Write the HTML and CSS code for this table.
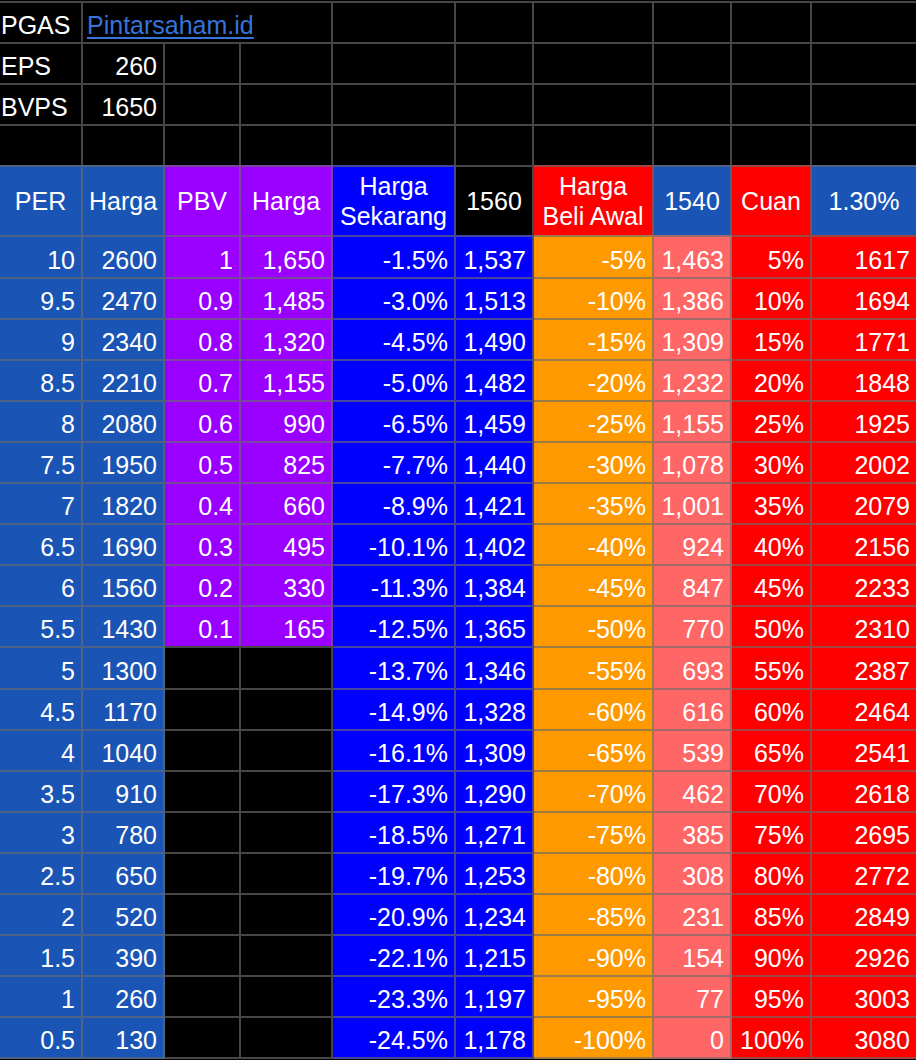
FILE: index.html
```html
<!DOCTYPE html>
<html>
<head>
<meta charset="utf-8">
<title>PGAS</title>
<link rel="stylesheet" href="styles.css">
</head>
<body>
<div class="sheet">
  <div class="c l">PGAS</div><div class="c link s3"><a href="#">Pintarsaham.id</a></div><div class="c"></div><div class="c"></div><div class="c"></div><div class="c"></div><div class="c"></div><div class="c e"></div>
  <div class="c l">EPS</div><div class="c n">260</div><div class="c"></div><div class="c"></div><div class="c"></div><div class="c"></div><div class="c"></div><div class="c"></div><div class="c"></div><div class="c e"></div>
  <div class="c l">BVPS</div><div class="c n">1650</div><div class="c"></div><div class="c"></div><div class="c"></div><div class="c"></div><div class="c"></div><div class="c"></div><div class="c"></div><div class="c e"></div>
  <div class="c"></div><div class="c"></div><div class="c"></div><div class="c"></div><div class="c"></div><div class="c"></div><div class="c"></div><div class="c"></div><div class="c"></div><div class="c e"></div>

  <div class="c h b">PER</div><div class="c h b">Harga</div><div class="c h p">PBV</div><div class="c h p">Harga</div><div class="c h u">Harga<br>Sekarang</div><div class="c h">1560</div><div class="c h r">Harga<br>Beli Awal</div><div class="c h b">1540</div><div class="c h r">Cuan</div><div class="c h b e">1.30%</div>

  <div class="c n b">10</div><div class="c n b">2600</div><div class="c n p">1</div><div class="c n p">1,650</div><div class="c n u">-1.5%</div><div class="c n u">1,537</div><div class="c n o">-5%</div><div class="c n k">1,463</div><div class="c n r">5%</div><div class="c n r e">1617</div>
  <div class="c n b">9.5</div><div class="c n b">2470</div><div class="c n p">0.9</div><div class="c n p">1,485</div><div class="c n u">-3.0%</div><div class="c n u">1,513</div><div class="c n o">-10%</div><div class="c n k">1,386</div><div class="c n r">10%</div><div class="c n r e">1694</div>
  <div class="c n b">9</div><div class="c n b">2340</div><div class="c n p">0.8</div><div class="c n p">1,320</div><div class="c n u">-4.5%</div><div class="c n u">1,490</div><div class="c n o">-15%</div><div class="c n k">1,309</div><div class="c n r">15%</div><div class="c n r e">1771</div>
  <div class="c n b">8.5</div><div class="c n b">2210</div><div class="c n p">0.7</div><div class="c n p">1,155</div><div class="c n u">-5.0%</div><div class="c n u">1,482</div><div class="c n o">-20%</div><div class="c n k">1,232</div><div class="c n r">20%</div><div class="c n r e">1848</div>
  <div class="c n b">8</div><div class="c n b">2080</div><div class="c n p">0.6</div><div class="c n p">990</div><div class="c n u">-6.5%</div><div class="c n u">1,459</div><div class="c n o">-25%</div><div class="c n k">1,155</div><div class="c n r">25%</div><div class="c n r e">1925</div>
  <div class="c n b">7.5</div><div class="c n b">1950</div><div class="c n p">0.5</div><div class="c n p">825</div><div class="c n u">-7.7%</div><div class="c n u">1,440</div><div class="c n o">-30%</div><div class="c n k">1,078</div><div class="c n r">30%</div><div class="c n r e">2002</div>
  <div class="c n b">7</div><div class="c n b">1820</div><div class="c n p">0.4</div><div class="c n p">660</div><div class="c n u">-8.9%</div><div class="c n u">1,421</div><div class="c n o">-35%</div><div class="c n k">1,001</div><div class="c n r">35%</div><div class="c n r e">2079</div>
  <div class="c n b">6.5</div><div class="c n b">1690</div><div class="c n p">0.3</div><div class="c n p">495</div><div class="c n u">-10.1%</div><div class="c n u">1,402</div><div class="c n o">-40%</div><div class="c n k">924</div><div class="c n r">40%</div><div class="c n r e">2156</div>
  <div class="c n b">6</div><div class="c n b">1560</div><div class="c n p">0.2</div><div class="c n p">330</div><div class="c n u">-11.3%</div><div class="c n u">1,384</div><div class="c n o">-45%</div><div class="c n k">847</div><div class="c n r">45%</div><div class="c n r e">2233</div>
  <div class="c n b">5.5</div><div class="c n b">1430</div><div class="c n p">0.1</div><div class="c n p">165</div><div class="c n u">-12.5%</div><div class="c n u">1,365</div><div class="c n o">-50%</div><div class="c n k">770</div><div class="c n r">50%</div><div class="c n r e">2310</div>
  <div class="c n b">5</div><div class="c n b">1300</div><div class="c"></div><div class="c"></div><div class="c n u">-13.7%</div><div class="c n u">1,346</div><div class="c n o">-55%</div><div class="c n k">693</div><div class="c n r">55%</div><div class="c n r e">2387</div>
  <div class="c n b">4.5</div><div class="c n b">1170</div><div class="c"></div><div class="c"></div><div class="c n u">-14.9%</div><div class="c n u">1,328</div><div class="c n o">-60%</div><div class="c n k">616</div><div class="c n r">60%</div><div class="c n r e">2464</div>
  <div class="c n b">4</div><div class="c n b">1040</div><div class="c"></div><div class="c"></div><div class="c n u">-16.1%</div><div class="c n u">1,309</div><div class="c n o">-65%</div><div class="c n k">539</div><div class="c n r">65%</div><div class="c n r e">2541</div>
  <div class="c n b">3.5</div><div class="c n b">910</div><div class="c"></div><div class="c"></div><div class="c n u">-17.3%</div><div class="c n u">1,290</div><div class="c n o">-70%</div><div class="c n k">462</div><div class="c n r">70%</div><div class="c n r e">2618</div>
  <div class="c n b">3</div><div class="c n b">780</div><div class="c"></div><div class="c"></div><div class="c n u">-18.5%</div><div class="c n u">1,271</div><div class="c n o">-75%</div><div class="c n k">385</div><div class="c n r">75%</div><div class="c n r e">2695</div>
  <div class="c n b">2.5</div><div class="c n b">650</div><div class="c"></div><div class="c"></div><div class="c n u">-19.7%</div><div class="c n u">1,253</div><div class="c n o">-80%</div><div class="c n k">308</div><div class="c n r">80%</div><div class="c n r e">2772</div>
  <div class="c n b">2</div><div class="c n b">520</div><div class="c"></div><div class="c"></div><div class="c n u">-20.9%</div><div class="c n u">1,234</div><div class="c n o">-85%</div><div class="c n k">231</div><div class="c n r">85%</div><div class="c n r e">2849</div>
  <div class="c n b">1.5</div><div class="c n b">390</div><div class="c"></div><div class="c"></div><div class="c n u">-22.1%</div><div class="c n u">1,215</div><div class="c n o">-90%</div><div class="c n k">154</div><div class="c n r">90%</div><div class="c n r e">2926</div>
  <div class="c n b">1</div><div class="c n b">260</div><div class="c"></div><div class="c"></div><div class="c n u">-23.3%</div><div class="c n u">1,197</div><div class="c n o">-95%</div><div class="c n k">77</div><div class="c n r">95%</div><div class="c n r e">3003</div>
  <div class="c n b z">0.5</div><div class="c n b z">130</div><div class="c z"></div><div class="c z"></div><div class="c n u z">-24.5%</div><div class="c n u z">1,178</div><div class="c n o z">-100%</div><div class="c n k z">0</div><div class="c n r z">100%</div><div class="c n r e z">3080</div>
</div>
</body>
</html>
```
FILE: styles.css
```css
html, body {
  margin: 0;
  padding: 0;
  background: #000;
}
body {
  width: 916px;
  height: 1060px;
  overflow: hidden;
  font-family: "Liberation Sans", Arial, sans-serif;
  font-size: 25px;
  color: #fff;
}
.sheet {
  --line: rgba(106, 106, 106, 0.66);
  padding-top: 1px;
  display: grid;
  grid-template-columns: 83px 82px 76px 92px 123px 78px 120px 78px 80px 1fr;
  grid-template-rows: repeat(4, 41px) 70px 42px repeat(9, 41px) 42px repeat(8, 41px) 43px;
}
.c {
  border-top: 2px solid var(--line);
  border-right: 2px solid var(--line);
  display: flex;
  align-items: flex-end;
  padding: 0 6px 3px 6px;
  line-height: 28px;
  white-space: nowrap;
  min-width: 0;
}
.c.e { border-right: none; }
.c.z { border-bottom: 2px solid var(--line); }
.c.l { padding-left: 1px; }
.c.n { justify-content: flex-end; }
.c.s3 { grid-column: span 3; }
.c.link { padding-left: 4px; }
.c.link a {
  color: #3574dc;
  text-decoration: underline;
  text-decoration-thickness: 2px;
  text-underline-offset: 3px;
}
.c.h {
  align-items: center;
  justify-content: center;
  text-align: center;
  line-height: 30px;
  padding: 0 2px;
}
.b { background: #1a54b4; }
.p { background: #9900ff; }
.u { background: #0000ff; }
.o { background: #ff9900; }
.k { background: #ff6666; }
.r { background: #ff0000; }
```
